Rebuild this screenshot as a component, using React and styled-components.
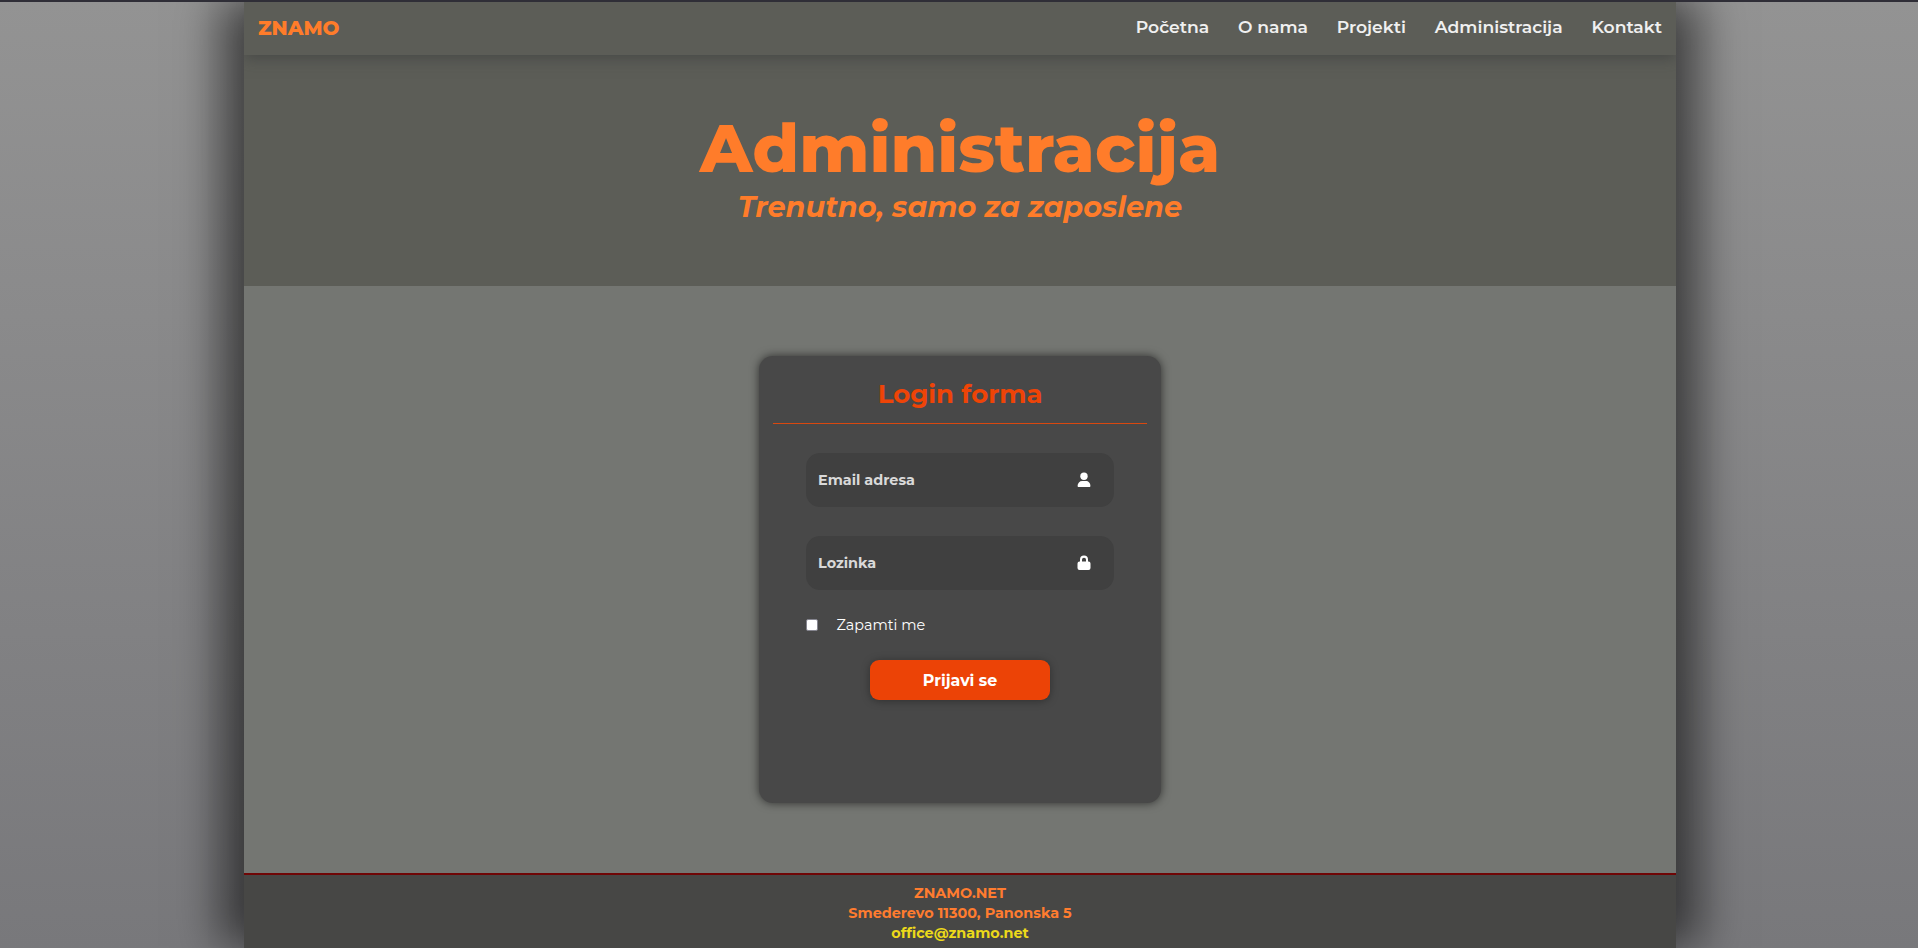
import React from "react";
import styled, { createGlobalStyle } from "styled-components";

const Global = createGlobalStyle`
  *, *::before, *::after { box-sizing: border-box; }
  html { background: #78787a; }
  body {
    margin: 0;
    height: 948px;
    overflow: hidden;
    font-family: Montserrat, Inter, "Noto Sans", sans-serif;
    background: linear-gradient(180deg, #939393 0%, #78787b 100%);
  }
`;

const Screen = styled.div`
  height: 948px;
  border-top: 2px solid #2f2e37;
  padding-left: 244px;
  overflow: hidden;
`;

const Page = styled.div`
  width: 1432px;
  height: 946px;
  display: flex;
  flex-direction: column;
  box-shadow: 25px -2px 41px rgba(0, 0, 0, 0.5), -25px -2px 41px rgba(0, 0, 0, 0.5);
`;

const Nav = styled.nav`
  position: relative;
  z-index: 1;
  height: 53px;
  flex: none;
  display: flex;
  align-items: center;
  justify-content: space-between;
  padding: 0 14px 3px;
  background: #5c5d57;
  box-shadow: 0 3px 14px rgba(50, 52, 54, 0.5);
  clip-path: inset(0 0 -24px 0);
`;

const Brand = styled.a`
  font-size: 20px;
  line-height: 24px;
  font-weight: 800;
  color: #ff7c2a;
  padding-top: 2px;
`;

const Links = styled.div`
  display: flex;
  gap: 28.8px;
`;

const NavLink = styled.a`
  font-size: 17.2px;
  line-height: 20px;
  font-weight: 600;
  color: #f0f0f0;
`;

const Hero = styled.header`
  height: 231px;
  flex: none;
  padding-top: 52px;
  display: flex;
  flex-direction: column;
  align-items: center;
  background: #5c5d57;
  color: #ff7c2a;
`;

const Title = styled.h1`
  margin: 0;
  font-size: 67.2px;
  line-height: 82px;
  font-weight: 800;
`;

const Subtitle = styled.h2`
  margin: 0;
  font-size: 28.8px;
  line-height: 36px;
  font-weight: 700;
  font-style: italic;
`;

const Main = styled.main`
  height: 587px;
  flex: none;
  padding-top: 70px;
  display: flex;
  justify-content: center;
  align-items: flex-start;
  background: #747672;
`;

const Card = styled.form`
  width: 402px;
  height: 447px;
  padding: 0 14px;
  border-radius: 14px;
  background: #484848;
  box-shadow: 0 0 10px rgba(0, 0, 0, 0.6);
`;

const CardTitle = styled.h3`
  margin: 0;
  height: 68px;
  padding-top: 8px;
  display: flex;
  align-items: center;
  justify-content: center;
  font-size: 25.92px;
  line-height: 60px;
  font-weight: 700;
  color: #ee4407;
  border-bottom: 1px solid #d9480f;
`;

const Fields = styled.div`
  padding: 29px 33px 0;
  display: flex;
  flex-direction: column;
  gap: 29px;
`;

const Field = styled.label`
  height: 54px;
  padding: 0 23px 0 12px;
  display: flex;
  align-items: center;
  justify-content: space-between;
  border-radius: 14px;
  background: #404040;
`;

const Input = styled.input`
  width: 220px;
  border: 0;
  outline: 0;
  padding: 0;
  background: transparent;
  font-family: inherit;
  font-size: 14.4px;
  font-weight: 700;
  color: #d9d9d9;
  &::placeholder { color: #d9d9d9; opacity: 1; }
`;

const Icon = styled.svg`
  width: 14px;
  height: 16px;
  fill: #fff;
`;

const Remember = styled.label`
  display: flex;
  align-items: center;
  height: 20px;
  margin: 25px 33px 0;
  gap: 18.4px;
  font-size: 14.4px;
  font-weight: 400;
  color: #fff;
`;

const Check = styled.input`
  appearance: none;
  width: 12px;
  height: 12px;
  margin: 0;
  border: 1px solid #85858f;
  border-radius: 2px;
  background: #fff;
`;

const Submit = styled.button`
  display: flex;
  align-items: center;
  justify-content: center;
  width: 180px;
  height: 40px;
  margin: 25px auto 0;
  padding: 0;
  border: 0;
  border-radius: 9px;
  background: #ec4306;
  box-shadow: 0 1px 9px rgba(0, 0, 0, 0.35);
  font-family: inherit;
  font-size: 15.84px;
  font-weight: 700;
  color: #fff;
`;

const Footer = styled.footer`
  flex: 1;
  border-top: 2px solid #6f0606;
  padding-top: 8px;
  display: flex;
  flex-direction: column;
  align-items: center;
  background: #474745;
`;

const FooterLine = styled.div`
  height: 20px;
  line-height: 20px;
  font-size: 14.4px;
  font-weight: 700;
  color: ${(p) => (p.$mail ? "#ecd91a" : "#ff7c2f")};
`;

const links = ["Početna", "O nama", "Projekti", "Administracija", "Kontakt"];

export default function App() {
  return (
    <>
      <Global />
      <Screen>
        <Page>
          <Nav>
            <Brand>ZNAMO</Brand>
            <Links>
              {links.map((name) => (
                <NavLink key={name}>{name}</NavLink>
              ))}
            </Links>
          </Nav>
          <Hero>
            <Title>Administracija</Title>
            <Subtitle>Trenutno, samo za zaposlene</Subtitle>
          </Hero>
          <Main>
            <Card>
              <CardTitle>Login forma</CardTitle>
              <Fields>
                <Field>
                  <Input placeholder="Email adresa" />
                  <Icon viewBox="0 0 14 16">
                    <circle cx="7" cy="4.3" r="3.7" />
                    <path d="M.6 14c0-3 2-5 4.600-5h3.600c2.600 0 4.600 2 4.600 5 0 .6-.4 1-1 1H1.600c-.6 0-1-.4-1-1z" />
                  </Icon>
                </Field>
                <Field>
                  <Input placeholder="Lozinka" />
                  <Icon viewBox="0 0 14 16">
                    <path
                      fillRule="evenodd"
                      d="M3 6.500V4.600a4 4 0 0 1 8 0v1.900h.5a2 2 0 0 1 2 2V13a2 2 0 0 1-2 2h-9a2 2 0 0 1-2-2V8.500a2 2 0 0 1 2-2zm2 0h4V4.700a2 2 0 0 0-4 0z"
                    />
                  </Icon>
                </Field>
              </Fields>
              <Remember>
                <Check type="checkbox" />
                Zapamti me
              </Remember>
              <Submit type="button">Prijavi se</Submit>
            </Card>
          </Main>
          <Footer>
            <FooterLine>ZNAMO.NET</FooterLine>
            <FooterLine>Smederevo 11300, Panonska 5</FooterLine>
            <FooterLine $mail>office@znamo.net</FooterLine>
          </Footer>
        </Page>
      </Screen>
    </>
  );
}
